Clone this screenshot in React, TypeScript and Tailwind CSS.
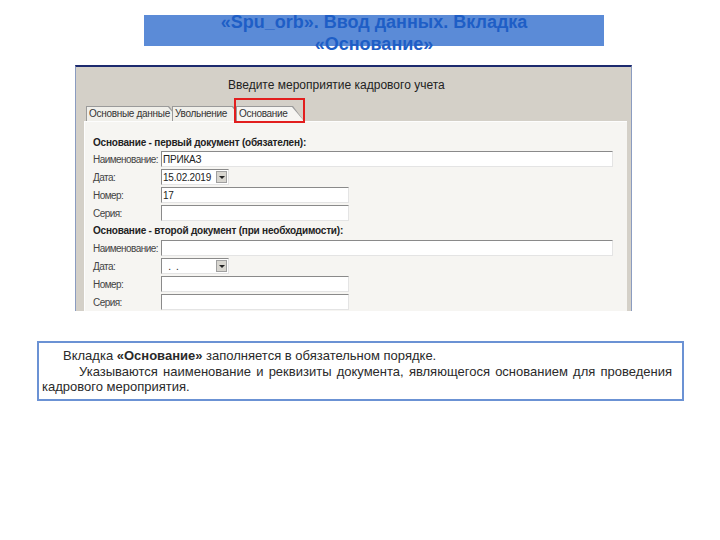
import React from "react";

type Row = { label: string; value?: string; kind: "long" | "short" | "date" };

const first: Row[] = [
  { label: "Наименование:", value: "ПРИКАЗ", kind: "long" },
  { label: "Дата:", value: "15.02.2019", kind: "date" },
  { label: "Номер:", value: "17", kind: "short" },
  { label: "Серия:", kind: "short" },
];

const second: Row[] = [
  { label: "Наименование:", kind: "long" },
  { label: "Дата:", value: "  .  .", kind: "date" },
  { label: "Номер:", kind: "short" },
  { label: "Серия:", kind: "short" },
];

const Field = ({ row }: { row: Row }) => {
  const width = row.kind === "long" ? "w-[452px]" : row.kind === "short" ? "w-[188px]" : "w-[68px]";
  return (
    <div className="flex items-center h-[18px]">
      <div className="w-[68px] text-[#444] tracking-[-0.55px] whitespace-nowrap">{row.label}</div>
      <div
        className={`${width} h-[16px] bg-white border border-t-[#8a8a8a] border-l-[#8a8a8a] border-r-[#e4e4e4] border-b-[#e4e4e4] flex items-center pl-[1px] text-[#222] tracking-[-0.2px] whitespace-pre relative`}
      >
        {row.value}
        {row.kind === "date" && (
          <div className="absolute right-[1px] top-[1px] w-[11px] h-[12px] bg-[#d8d6d0] border border-[#a0a0a0] flex items-center justify-center">
            <div className="w-0 h-0 border-l-[3px] border-r-[3px] border-t-[3px] border-l-transparent border-r-transparent border-t-[#222]" />
          </div>
        )}
      </div>
    </div>
  );
};

const Tab = ({ label, width, active }: { label: string; width: string; active?: boolean }) => (
  <div className={`${width} h-[15px] bg-[#9a9a9a] [clip-path:polygon(0_0,calc(100%_-_11px)_0,100%_100%,0_100%)] pt-[1px] pl-[1px] -mr-[8px]`}>
    <div
      className={`h-full ${
        active ? "bg-[#f6f5f2]" : "bg-[#f0efea]"
      } [clip-path:polygon(0_0,calc(100%_-_12px)_0,100%_100%,0_100%)] pl-[2px] text-[10px] leading-[14px] tracking-[-0.3px] text-[#333] whitespace-nowrap`}
    >
      {label}
    </div>
  </div>
);

export default function App() {
  return (
    <div className="w-[720px] h-[540px] bg-white flex flex-col font-['Liberation_Sans',Arial,sans-serif]">
      <div className="ml-[144px] mt-[15px] w-[460px] h-[31px] bg-[#5b8bd7]">
        <div className="-mt-[4px] text-center text-[18px] leading-[22px] font-bold text-[#1e5ec6]">
          «Spu_orb». Ввод данных. Вкладка
          <br />
          «Основание»
        </div>
      </div>

      <div className="ml-[75px] mt-[19px] w-[557px] h-[246px] bg-[#d4d0c8] border-t-2 border-t-[#1c2a6e] border-x border-x-[#8b9cc0] flex flex-col">
        <div className="h-[40px] pt-[9px] pl-[152px] text-[12px] text-[#222]">Введите мероприятие кадрового учета</div>
        <div className="relative flex items-end pl-[10px] h-[15px]">
          <Tab label="Основные данные" width="w-[94px]" />
          <Tab label="Увольнение" width="w-[72px]" />
          <Tab label="Основание" width="w-[68px]" active />
          <div className="absolute left-[158px] -top-[8px] w-[71px] h-[25px] border-2 border-[#e21e1e]" />
        </div>
        <div className="flex-1 ml-[8px] mr-[4px] bg-[#f6f5f2] border-l border-t border-[#fdfdfd] pl-[8px] pt-[13px] text-[10px] text-[#333]">
          <div className="font-bold h-[15px] leading-[15px] tracking-[-0.2px] text-[#222]">Основание - первый документ (обязателен):</div>
          {first.map((r, i) => (
            <Field key={i} row={r} />
          ))}
          <div className="font-bold h-[17px] leading-[17px] tracking-[-0.2px] text-[#222]">Основание - второй документ (при необходимости):</div>
          {second.map((r, i) => (
            <Field key={i} row={r} />
          ))}
        </div>
      </div>

      <div className="ml-[37px] mt-[30px] w-[647px] h-[60px] border-2 border-[#6b92d4] pl-[3px] pr-[10px] pt-[5px] text-[13px] leading-[15.5px] text-[#2a2a2a]">
        <p className="indent-[21px]">
          Вкладка <b>«Основание»</b> заполняется в обязательном порядке.
        </p>
        <p className="indent-[37px] text-justify">
          Указываются наименование и реквизиты документа, являющегося основанием для проведения кадрового мероприятия.
        </p>
      </div>
    </div>
  );
}
